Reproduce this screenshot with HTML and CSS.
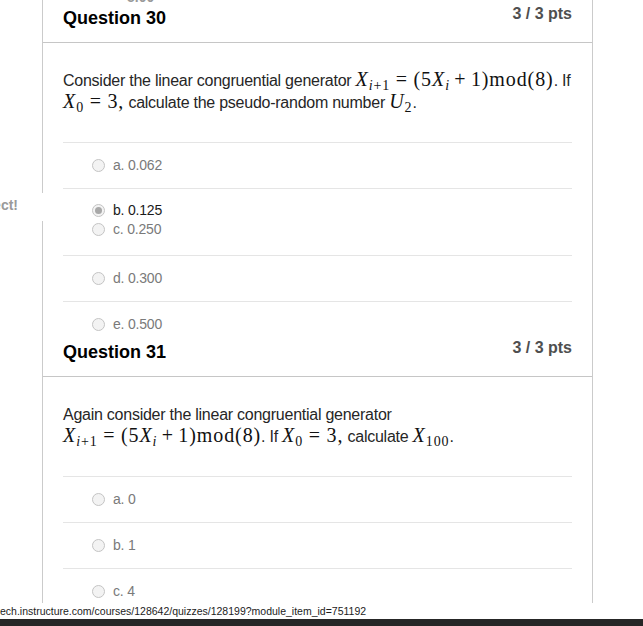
FILE: index.html
```html
<!DOCTYPE html>
<html lang="en">
<head>
<meta charset="utf-8">
<title>Quiz results</title>
<link rel="stylesheet" href="styles.css">
</head>
<body>
<div class="screen">
  <main class="quiz">
    <section class="card card--first">
      <div class="prev-score">5.00</div>
      <header class="q-header">
        <h2 class="q-title">Question 30</h2>
        <span class="q-pts">3 / 3 pts</span>
      </header>
      <div class="q-body">
        <p class="q-text">Consider the linear congruential generator <span class="math"><var>X</var><sub><var>i</var>+1</sub><span class="rel">=</span>(5<var>X</var><sub><var>i</var></sub><span class="bin">+</span>1)mod(8)</span>. If<br><span class="math"><var>X</var><sub>0</sub><span class="rel">=</span>3,</span> calculate the pseudo-random number <span class="math"><var>U</var><sub>2</sub></span>.</p>
        <div class="answers">
          <div class="answer-row">
            <label class="answer"><span class="radio"></span>a. 0.062</label>
          </div>
          <div class="answer-row answer-row--pair">
            <span class="result">Correct!</span>
            <label class="answer answer--selected"><span class="radio radio--checked"></span>b. 0.125</label>
            <label class="answer"><span class="radio"></span>c. 0.250</label>
          </div>
          <div class="answer-row">
            <label class="answer"><span class="radio"></span>d. 0.300</label>
          </div>
          <div class="answer-row answer-row--cut">
            <label class="answer"><span class="radio"></span>e. 0.500</label>
          </div>
        </div>
      </div>
    </section>

    <section class="card">
      <header class="q-header">
        <h2 class="q-title">Question 31</h2>
        <span class="q-pts">3 / 3 pts</span>
      </header>
      <div class="q-body">
        <p class="q-text">Again consider the linear congruential generator<br><span class="math"><var>X</var><sub><var>i</var>+1</sub><span class="rel">=</span>(5<var>X</var><sub><var>i</var></sub><span class="bin">+</span>1)mod(8)</span>. If <span class="math"><var>X</var><sub>0</sub><span class="rel">=</span>3,</span> calculate <span class="math"><var>X</var><sub>100</sub></span>.</p>
        <div class="answers">
          <div class="answer-row">
            <label class="answer"><span class="radio"></span>a. 0</label>
          </div>
          <div class="answer-row">
            <label class="answer"><span class="radio"></span>b. 1</label>
          </div>
          <div class="answer-row">
            <label class="answer"><span class="radio"></span>c. 4</label>
          </div>
        </div>
      </div>
    </section>
  </main>
  <div class="status-url">ech.instructure.com/courses/128642/quizzes/128199?module_item_id=751192</div>
  <div class="taskbar"></div>
</div>
</body>
</html>
```

FILE: styles.css
```css
html, body {
  margin: 0;
  padding: 0;
  background: #ffffff;
}

body {
  font-family: "Liberation Sans", Arial, sans-serif;
  color: #2d2d2d;
}

.screen {
  width: 643px;
  height: 626px;
  display: flex;
  flex-direction: column;
  overflow: hidden;
}

.quiz {
  flex: none;
  height: 603px;
  overflow: hidden;
}

.card {
  width: 551px;
  margin-left: 42px;
  box-sizing: border-box;
  border-left: 1px solid #cbcbcb;
  border-right: 1px solid #cbcbcb;
}

.card--first {
  margin-top: -14px;
}

.prev-score {
  height: 16px;
  padding-left: 84px;
  font-size: 14px;
  line-height: 22px;
  font-weight: bold;
  color: #9a9a9a;
}

.q-header {
  display: flex;
  justify-content: space-between;
  align-items: flex-start;
  padding: 0 20px 13px;
  border-bottom: 1px solid #c6c6c6;
}

.q-title {
  margin: 5px 0 0;
  font-size: 18px;
  line-height: 22px;
  font-weight: bold;
  color: #000000;
}

.q-pts {
  margin-top: 2px;
  font-size: 16px;
  line-height: 20px;
  font-weight: bold;
  color: #4f4f4f;
}

.q-body {
  padding: 27px 20px 0;
}

.q-text {
  margin: 0 0 28px;
  font-size: 16px;
  line-height: 22px;
  letter-spacing: -0.25px;
  color: #262626;
  white-space: nowrap;
}

.math {
  font-family: "Liberation Serif", "Times New Roman", serif;
  font-size: 20px;
  letter-spacing: 0.9px;
  color: #111111;
  line-height: 0;
}

.math var {
  font-style: italic;
}

.math sub {
  font-size: 14px;
  vertical-align: -4px;
  line-height: 0;
}

.math .rel {
  margin: 0 0.28em;
}

.math .bin {
  margin: 0 0.22em;
}

.answer-row {
  position: relative;
  border-top: 1px solid #e5e5e5;
  padding: 12px 0 13px;
}

.answer-row--pair {
  padding-bottom: 16px;
}

.answer-row--pair .answer {
  line-height: 19px;
}

.answer-row--cut {
  padding-bottom: 2px;
}

.answer {
  display: flex;
  align-items: center;
  gap: 8px;
  padding-left: 29px;
  font-size: 14px;
  line-height: 20px;
  letter-spacing: -0.2px;
  color: #7a7a7a;
}

.answer--selected {
  color: #1a1a1a;
}

.radio {
  flex: none;
  width: 13px;
  height: 13px;
  box-sizing: border-box;
  border-radius: 50%;
  border: 1px solid #c4c4c4;
  background: #f3f3f3;
  display: flex;
  align-items: center;
  justify-content: center;
}

.radio--checked::after {
  content: "";
  width: 7px;
  height: 7px;
  border-radius: 50%;
  background: #a8a8a8;
}

.result {
  position: absolute;
  right: calc(100% + 19px);
  top: 4px;
  padding: 0 26px 4px 0;
  background: #ffffff;
  font-size: 14px;
  line-height: 24px;
  font-weight: bold;
  color: #9a9a9a;
  white-space: nowrap;
}

.status-url {
  flex: none;
  height: 16px;
  font-size: 10.5px;
  line-height: 16px;
  color: #1c1c1c;
  background: #ffffff;
  white-space: nowrap;
}

.taskbar {
  flex: 1;
  background: #262626;
}
```
